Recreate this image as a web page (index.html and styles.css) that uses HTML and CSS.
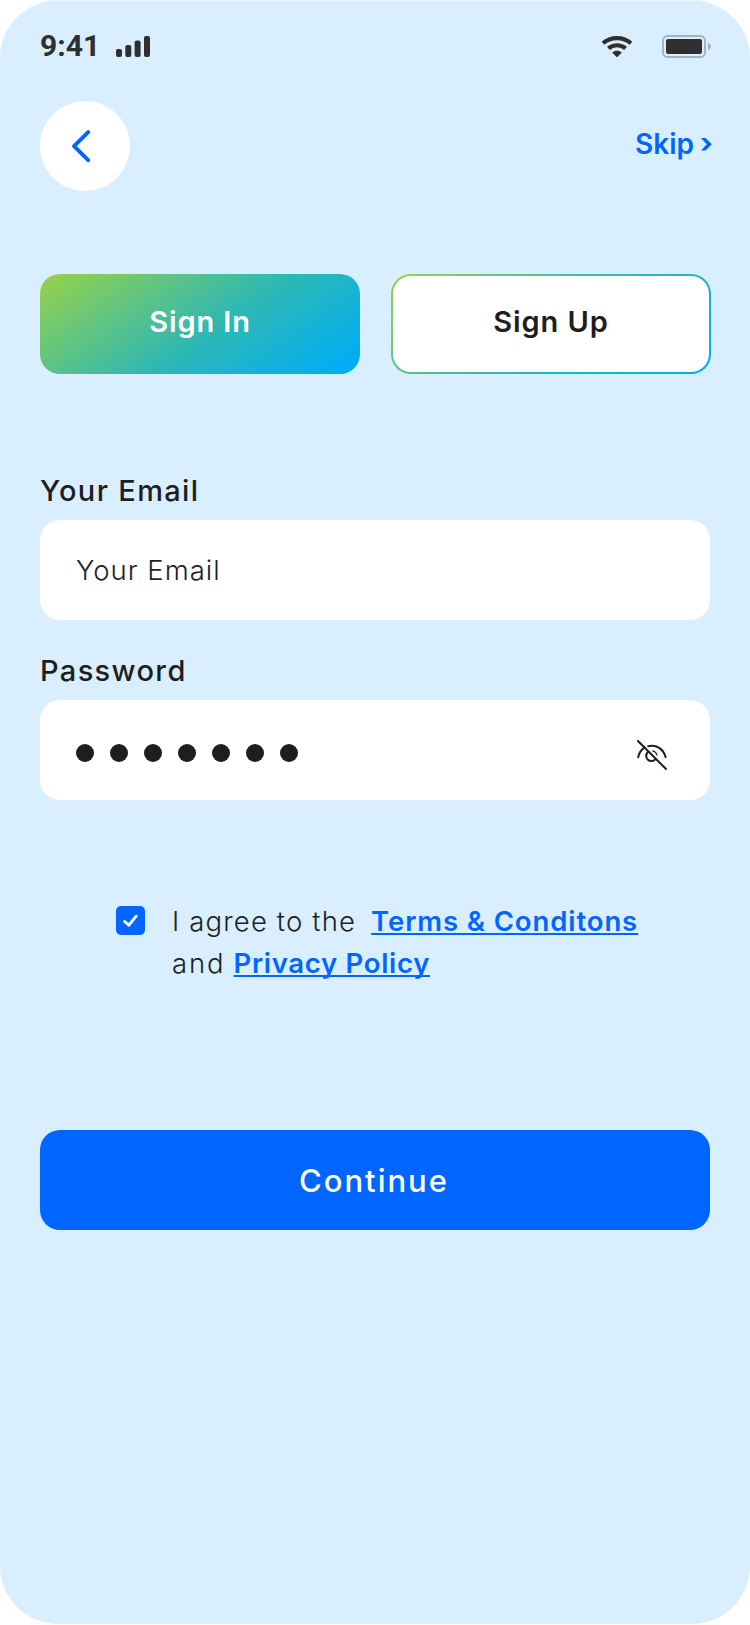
FILE: index.html
```html
<!DOCTYPE html>
<html lang="en">
<head>
<meta charset="utf-8">
<title>Sign In</title>
<link rel="stylesheet" href="styles.css">
</head>
<body>
<main class="screen">
  <div class="status">
    <span class="time">9:41</span>
    <svg class="signal" width="35" height="22" viewBox="0 0 35 22" fill="#2f2f2f"><rect x="0" y="13" width="6" height="8" rx="2"/><rect x="9.3" y="9" width="6" height="12" rx="2"/><rect x="18.6" y="4.500" width="6" height="16.500" rx="2"/><rect x="28" y="0" width="6" height="21" rx="2"/></svg>
    <svg class="wifi" width="32" height="24" viewBox="0 0 32 24" fill="none" stroke="#2f2f2f" stroke-width="4.200"><path d="M2 8.200C9.800 1.300 22.200 1.300 30 8.200"/><path d="M7.400 13.400C12.300 9.200 19.700 9.200 24.600 13.400"/><path d="M11.200 17.600C13.800 15.200 18.200 15.200 20.800 17.600L16.600 21.800Q16 22.400 15.400 21.800Z" fill="#2f2f2f" stroke="none"/></svg>
    <svg class="battery" width="50" height="24" viewBox="0 0 50 24"><rect x="1" y="1" width="42" height="21" rx="4.500" fill="none" stroke="#a3b1bc" stroke-width="1.900"/><rect x="4" y="4" width="36" height="15" rx="2" fill="#2f2f2f"/><path d="M46 7.500Q49 9 49 11.500T46 15.500Z" fill="#a3b1bc"/></svg>
  </div>
  <nav class="nav">
    <button class="back" aria-label="Back"><svg width="90" height="90" viewBox="0 0 90 90" fill="none" stroke="#0066ff" stroke-width="4" stroke-linecap="round" stroke-linejoin="round"><path d="M48.200 31.200L34 45.200L48.200 59.200"/></svg></button>
    <a class="skip"><span>Skip</span><svg width="11" height="15" viewBox="0 0 11 15" fill="#0066ff"><path d="M0 1H4.500L10.800 7.200L4.500 13.400H0L5.800 7.200Z"/></svg></a>
  </nav>
  <div class="tabs">
    <button class="tab tab-active">Sign In</button>
    <button class="tab tab-outline">Sign Up</button>
  </div>
  <form class="form">
    <label class="label">Your Email</label>
    <div class="field"><span class="placeholder">Your Email</span></div>
    <label class="label label-second">Password</label>
    <div class="field">
      <div class="dots"><i></i><i></i><i></i><i></i><i></i><i></i><i></i></div>
      <svg class="eye" width="32" height="32" viewBox="0 0 32 32" fill="none" stroke="#1e1e1e" stroke-width="2" stroke-linecap="round"><path d="M2 2L30 30"/><path d="M2.200 18.200C3.200 13.800 5.200 10.600 8.600 8.400"/><path d="M12.200 7.200C20.500 5.200 27.500 10 29.600 18.200"/><path d="M11.600 13.200A5.300 5.300 0 1 0 19.400 20.400"/><path d="M16.800 11.800Q20.200 12.700 20.900 16" stroke-width="1.200"/></svg>
    </div>
  </form>
  <div class="agree">
    <svg class="check" width="29" height="29" viewBox="0 0 29 29"><rect width="29" height="29" rx="5" fill="#0066ff"/><path d="M8.600 15.500L12.900 19.200L20.200 10.200" fill="none" stroke="#fff" stroke-width="2.900" stroke-linecap="round" stroke-linejoin="round"/></svg>
    <p class="terms">
      <span class="line"><span class="agree-text">I agree to the</span><a class="link terms-link">Terms &amp; Conditons</a></span>
      <span class="line line-two"><span class="and">and</span><a class="link privacy-link">Privacy Policy</a></span>
    </p>
  </div>
  <button class="continue">Continue</button>
</main>
</body>
</html>
```

FILE: styles.css
```css
* { box-sizing: border-box; }
body { margin: 0; background: #fff; font-family: Inter, "Open Sans", sans-serif; color: #1e1e1e; }
button { border: 0; padding: 0; font: inherit; }
svg { display: block; flex: none; }
.screen { width: 750px; height: 1624px; padding: 0 40px; border-radius: 58px; background: #d9eeff; box-shadow: inset 0 1px 0 #e8f5ff; }
.status { display: flex; align-items: flex-start; height: 101px; padding-top: 35px; }
.time { flex: none; width: 76px; font: 700 30px/22px Roboto, sans-serif; color: #2f2f2f; }
.signal { margin-top: 1px; }
.wifi { margin-left: 450px; }
.battery { margin-left: 29px; }
.nav { display: flex; justify-content: space-between; height: 173px; }
.back { width: 90px; height: 90px; border-radius: 50%; background: #fff; }
.skip { display: flex; align-items: center; gap: 7px; height: 86px; margin-right: -2px; color: #0066ff; font-size: 28px; font-weight: 600; }
.tabs { display: flex; gap: 31px; }
.tab { flex: none; width: 320px; height: 100px; border-radius: 20px; font-size: 29px; font-weight: 600; line-height: 96px; padding-bottom: 4px; letter-spacing: 0.9px; }
.tab-active { color: #fff; background: linear-gradient(145deg, #92d14f 3%, #2fb8b3 54%, #00adf5 95%); }
.tab-outline { color: #1e1e1e; line-height: 92px; border: 2px solid transparent; background: linear-gradient(#fff, #fff) padding-box, linear-gradient(145deg, #92d14f 3%, #2fb8b3 54%, #00adf5 95%) border-box; }
.form { padding-top: 96px; }
.label { display: block; height: 50px; line-height: 41px; font-size: 29px; font-weight: 500; letter-spacing: 1.350px; }
.label-second { margin-top: 30px; }
.field { display: flex; align-items: center; height: 100px; padding: 0 42px 0 36px; border-radius: 20px; background: #fff; font-size: 27.500px; font-weight: 300; }
.placeholder { letter-spacing: 1px; }
.dots { display: flex; gap: 16px; flex: 1; padding-top: 6px; }
.dots i { width: 18px; height: 18px; border-radius: 50%; background: #1e1e1e; }
.eye { margin-top: 10px; }
.agree { display: flex; padding: 106px 0 0 76px; height: 330px; }
.terms { margin: -6px 0 0 27px; font-size: 27.500px; font-weight: 300; line-height: 42px; white-space: nowrap; }
.line { display: flex; gap: 15px; }
.line-two { gap: 8px; }
.agree-text { letter-spacing: 1.150px; }
.and { letter-spacing: 1.900px; }
.link { color: #0066ff; font-weight: 600; text-decoration: underline; text-decoration-thickness: 1.500px; text-underline-offset: 2px; text-decoration-skip-ink: none; }
.terms-link { letter-spacing: 0.900px; }
.privacy-link { letter-spacing: 0.690px; }
.continue { display: block; width: 100%; height: 100px; padding-right: 2px; border-radius: 20px; background: #0066ff; color: #fff; font-size: 31px; font-weight: 500; letter-spacing: 2px; }
```
